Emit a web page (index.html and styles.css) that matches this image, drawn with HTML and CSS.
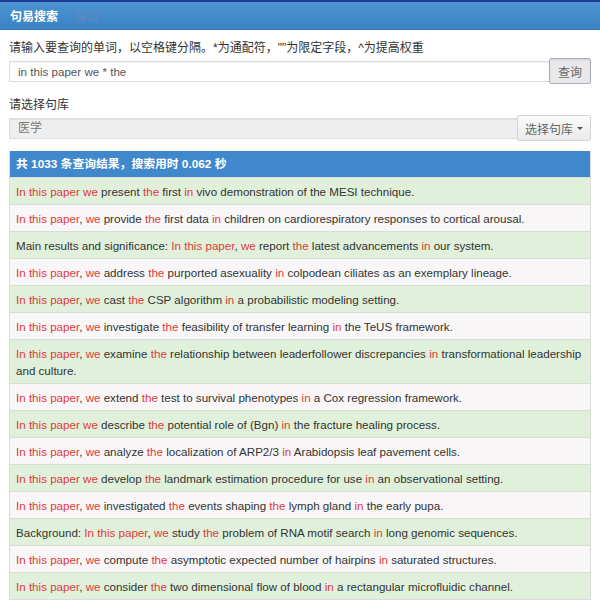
FILE: index.html
```html
<!DOCTYPE html>
<html lang="zh">
<head>
<meta charset="utf-8">
<title>句易搜索</title>
<link rel="stylesheet" href="styles.css">
</head>
<body>
<nav class="navbar">
  <span class="brand">句易搜索</span>
  <span class="nav-link">首页</span>
</nav>
<main class="content">
  <label class="label first">请输入要查询的单词，以空格键分隔。*为通配符，""为限定字段，^为提高权重</label>
  <div class="input-group">
    <div class="input">in this paper we * the</div>
    <button class="btn btn-active">查询</button>
  </div>
  <label class="label second">请选择句库</label>
  <div class="input-group">
    <div class="input disabled">医学</div>
    <button class="btn">选择句库 <span class="caret"></span></button>
  </div>
  <div class="results">
    <div class="results-head">共 1033 条查询结果，搜索用时 0.062 秒</div>
    <div class="row success"><span class="hl">In this paper we</span> present <span class="hl">the</span> first <span class="hl">in</span> vivo demonstration of the MESI technique.</div>
    <div class="row plain"><span class="hl">In this paper</span>, <span class="hl">we</span> provide <span class="hl">the</span> first data <span class="hl">in</span> children on cardiorespiratory responses to cortical arousal.</div>
    <div class="row success">Main results and significance: <span class="hl">In this paper</span>, <span class="hl">we</span> report <span class="hl">the</span> latest advancements <span class="hl">in</span> our system.</div>
    <div class="row plain"><span class="hl">In this paper</span>, <span class="hl">we</span> address <span class="hl">the</span> purported asexuality <span class="hl">in</span> colpodean ciliates as an exemplary lineage.</div>
    <div class="row success"><span class="hl">In this paper</span>, <span class="hl">we</span> cast <span class="hl">the</span> CSP algorithm <span class="hl">in</span> a probabilistic modeling setting.</div>
    <div class="row plain"><span class="hl">In this paper</span>, <span class="hl">we</span> investigate <span class="hl">the</span> feasibility of transfer learning <span class="hl">in</span> the TeUS framework.</div>
    <div class="row success"><span class="hl">In this paper</span>, <span class="hl">we</span> examine <span class="hl">the</span> relationship between leaderfollower discrepancies <span class="hl">in</span> transformational leadership and culture.</div>
    <div class="row plain"><span class="hl">In this paper</span>, <span class="hl">we</span> extend <span class="hl">the</span> test to survival phenotypes <span class="hl">in</span> a Cox regression framework.</div>
    <div class="row success"><span class="hl">In this paper we</span> describe <span class="hl">the</span> potential role of (Bgn) <span class="hl">in</span> the fracture healing process.</div>
    <div class="row plain"><span class="hl">In this paper</span>, <span class="hl">we</span> analyze <span class="hl">the</span> localization of ARP2/3 <span class="hl">in</span> Arabidopsis leaf pavement cells.</div>
    <div class="row success"><span class="hl">In this paper we</span> develop <span class="hl">the</span> landmark estimation procedure for use <span class="hl">in</span> an observational setting.</div>
    <div class="row plain"><span class="hl">In this paper</span>, <span class="hl">we</span> investigated <span class="hl">the</span> events shaping <span class="hl">the</span> lymph gland <span class="hl">in</span> the early pupa.</div>
    <div class="row success">Background: <span class="hl">In this paper</span>, <span class="hl">we</span> study <span class="hl">the</span> problem of RNA motif search <span class="hl">in</span> long genomic sequences.</div>
    <div class="row plain"><span class="hl">In this paper</span>, <span class="hl">we</span> compute <span class="hl">the</span> asymptotic expected number of hairpins <span class="hl">in</span> saturated structures.</div>
    <div class="row success"><span class="hl">In this paper</span>, <span class="hl">we</span> consider <span class="hl">the</span> two dimensional flow of blood <span class="hl">in</span> a rectangular microfluidic channel.</div>
  </div>
</main>
</body>
</html>
```

FILE: styles.css
```css
* { box-sizing: border-box; }
html, body { margin: 0; padding: 0; background: #fff; }
body {
  font-family: "Liberation Sans", Arial, "Noto Sans CJK SC", sans-serif;
  font-size: 12px;
  color: #333;
  overflow: hidden;
}
.navbar {
  height: 30px;
  border-top: 2px solid #1c3c96;
  background: linear-gradient(#4d94d2, #3b82c4);
  border-bottom: 1px solid #3674b3;
  display: flex;
  align-items: center;
  padding-left: 10px;
}
.brand {
  color: #fff;
  font-weight: bold;
  font-size: 12px;
}
.nav-link {
  margin-left: 17px;
  color: #6489bd;
  font-size: 12px;
}
.content {
  padding: 0 9px;
}
.label {
  display: block;
  line-height: 16px;
}
.label.first { margin-top: 10px; }
.label.second { margin-top: 13px; }
.input-group {
  display: flex;
  align-items: center;
  margin-top: 2px;
}
.input {
  flex: 1;
  height: 21px;
  line-height: 19px;
  border: 1px solid #ddd;
  border-right: none;
  padding: 0 8px;
  color: #555;
  font-size: 11.6px;
  background: #fff;
  box-shadow: inset 0 1px 1px rgba(0,0,0,0.06);
}
.input.disabled {
  background: #eee;
  color: #777;
  font-size: 12px;
}
.btn {
  font-family: inherit;
  font-size: 12px;
  color: #666;
  height: 26px;
  padding: 0 7px;
  background: linear-gradient(#fbfbfb, #eaeaea);
  border: 1px solid #d4d4d4;
  border-radius: 2px;
  display: flex;
  align-items: center;
  gap: 3px;
}
.btn-active {
  padding: 0 8px;
  background: #e9e9ec;
  border-color: #aab0bb;
  box-shadow: inset 0 1px 2px rgba(0,0,0,0.1);
}
.caret {
  width: 0;
  height: 0;
  border-left: 3px solid transparent;
  border-right: 3px solid transparent;
  border-top: 3px solid #555;
  margin-left: 1px;
}
.results {
  margin-top: 10px;
  border: 1px solid #dcdcdc;
  border-top: none;
}
.results-head {
  background: #3f88cc;
  color: #fff;
  font-weight: bold;
  font-size: 11.8px;
  height: 26px;
  line-height: 26px;
  padding: 0 6px;
}
.row {
  padding: 5px 6px 4px;
  line-height: 17px;
  font-size: 11.6px;
  border-top: 1px solid #d6dfd2;
}
.row.success { background: #e0f0da; }
.row.plain { background: #f8f6f7; }
.hl { color: #de3b3b; }
```
